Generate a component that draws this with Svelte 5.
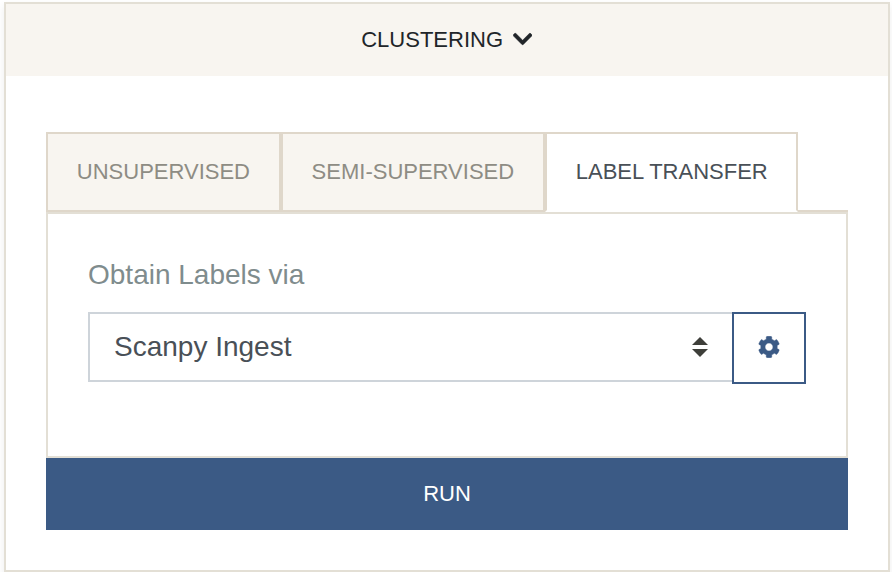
<script>
  const tabs = ['Unsupervised', 'Semi-Supervised', 'Label Transfer'];
  let active = $state(2);
</script>

<section class="card">
  <header>
    <span>CLUSTERING</span>
    <svg class="chevron" viewBox="0 0 448 512" aria-hidden="true"><path fill="currentColor" stroke="currentColor" stroke-width="12" d="M207.029 381.476L12.686 187.132c-9.373-9.373-9.373-24.569 0-33.941l22.667-22.667c9.357-9.357 24.522-9.375 33.901-.04L224 284.505l154.745-154.021c9.379-9.335 24.544-9.317 33.901.04l22.667 22.667c9.373 9.373 9.373 24.569 0 33.941L240.971 381.476c-9.373 9.372-24.569 9.372-33.942 0z" /></svg>
  </header>
  <div class="body">
    <nav>
      {#each tabs as tab, i}
        <button class="tab" class:active={active === i} onclick={() => (active = i)}>{tab}</button>
      {/each}
    </nav>
    <div class="panel">
      <div class="label">Obtain Labels via</div>
      <div class="group">
        <div class="select">
          <span>Scanpy Ingest</span>
          <svg width="16" height="20" viewBox="0 0 4 5" aria-hidden="true"><path fill="#3e3f3a" d="M2 0L0 2h4zm0 5L0 3h4z" /></svg>
        </div>
        <button class="settings" aria-label="Settings">
          <svg width="22" height="22" viewBox="0 0 512 512" aria-hidden="true"><path fill="currentColor" stroke="currentColor" stroke-width="10" d="M487.4 315.7l-42.6-24.6c4.3-23.2 4.3-47 0-70.2l42.6-24.6c4.9-2.8 7.1-8.6 5.500-14-11.1-35.6-30-67.8-54.7-94.6-3.8-4.1-10-5.1-14.8-2.3L380.8 110c-17.9-15.4-38.5-27.3-60.8-35.1V25.800c0-5.600-3.900-10.500-9.400-11.700-36.700-8.200-74.300-7.800-109.200 0-5.500 1.200-9.400 6.100-9.400 11.700V75c-22.200 7.900-42.800 19.800-60.800 35.100L88.700 85.500c-4.900-2.800-11-1.900-14.800 2.300-24.700 26.700-43.600 58.900-54.700 94.600-1.700 5.400.6 11.200 5.500 14L67.300 221c-4.300 23.200-4.300 47 0 70.200l-42.600 24.600c-4.900 2.800-7.100 8.600-5.500 14 11.100 35.600 30 67.800 54.700 94.600 3.800 4.100 10 5.100 14.800 2.300l42.600-24.600c17.900 15.400 38.500 27.300 60.800 35.100v49.200c0 5.600 3.900 10.500 9.400 11.700 36.700 8.200 74.300 7.800 109.200 0 5.500-1.200 9.400-6.100 9.400-11.700v-49.200c22.200-7.900 42.800-19.800 60.800-35.100l42.600 24.600c4.900 2.800 11 1.900 14.800-2.300 24.700-26.700 43.600-58.900 54.700-94.600 1.500-5.500-.7-11.300-5.600-14.100zM256 348c-50.800 0-92-41.200-92-92s41.200-92 92-92 92 41.200 92 92-41.200 92-92 92z" /></svg>
        </button>
      </div>
    </div>
    <button class="run">RUN</button>
  </div>
</section>

<style>
  :global(body) {
    background: #fff;
    overflow: hidden;
  }
  .card, .card * {
    box-sizing: border-box;
  }
  .card {
    width: 886px;
    height: 570px;
    margin: 2px 0 0 4px;
    border: 2px solid #e3dfd5;
    background: #fff;
    box-shadow: 0 4px 8px rgba(0, 0, 0, 0.075);
    font-family: "Liberation Sans", Arial, sans-serif;
    color: #212529;
  }
  header {
    height: 72px;
    display: flex;
    align-items: center;
    justify-content: center;
    gap: 9.5px;
    padding-right: 1px;
    background: #f8f5f0;
    font-size: 22px;
  }
  .chevron {
    width: 19.25px;
    height: 22px;
    margin-bottom: 3px;
  }
  .body {
    padding: 56px 40px 0;
  }
  button {
    font: inherit;
    margin: 0;
    border-radius: 0;
  }
  nav {
    display: flex;
    height: 80px;
    border-bottom: 2px solid #dfd7ca;
  }
  .tab {
    height: 80px;
    padding: 0 28.8px;
    border: 2px solid #dfd7ca;
    background: #f8f5f0;
    color: #8e8c84;
    font-size: 22px;
    text-transform: uppercase;
    white-space: nowrap;
  }
  .tab.active {
    background: #fff;
    border-bottom-color: #fff;
    color: #495057;
  }
  .panel {
    height: 246px;
    padding: 44px 40px 0;
    border: 2px solid #e3dfd5;
  }
  .label {
    height: 54px;
    line-height: 34px;
    font-size: 28px;
    color: #7f8c8d;
  }
  .group {
    display: flex;
    align-items: flex-start;
    width: 718px;
  }
  .select {
    flex: 1;
    height: 70px;
    display: flex;
    align-items: center;
    justify-content: space-between;
    padding: 0 24px;
    border: 2px solid #ced4da;
    border-right: 0;
    font-size: 28px;
    color: #495057;
  }
  .settings {
    width: 74px;
    height: 72px;
    display: flex;
    align-items: center;
    justify-content: center;
    padding: 0 1px 3px 0;
    border: 2px solid #3b5a85;
    background: #fff;
    color: #3b5a85;
  }
  .run {
    display: block;
    width: 100%;
    height: 72px;
    padding: 0;
    border: 0;
    background: #3b5a85;
    color: #fff;
    font-size: 22px;
  }
</style>
